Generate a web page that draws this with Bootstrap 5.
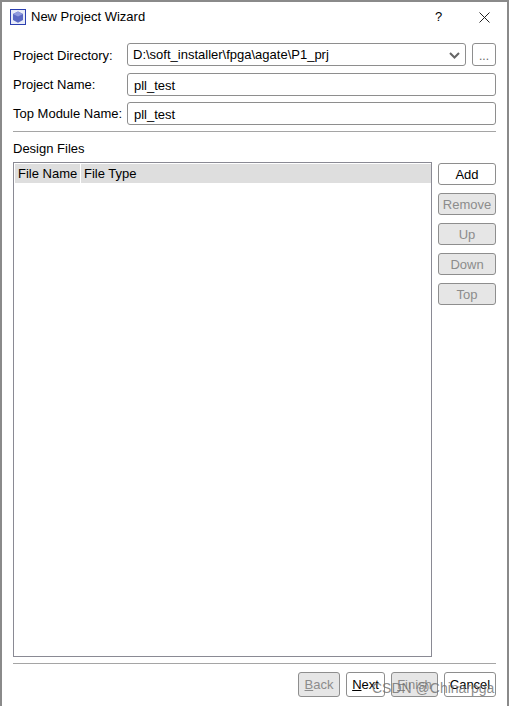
<!DOCTYPE html>
<html lang="en">
<head>
    <meta charset="UTF-8">
    <meta name="viewport" content="width=device-width, initial-scale=1.0">
    <title>New Project Wizard</title>
    <link href="https://cdn.jsdelivr.net/npm/bootstrap@5.3.3/dist/css/bootstrap.min.css" rel="stylesheet">
    <script src="https://cdn.jsdelivr.net/npm/bootstrap@5.3.3/dist/js/bootstrap.bundle.min.js"></script>
    <style>
        html, body { height: 100%; overflow: hidden; }
        body { background: #fff; color: #000; font-family: "Liberation Sans", Arial, sans-serif; font-size: 13px; }
        .wiz-window { position: relative; height: 706px; border: solid #8a8a8a; border-width: 2px 2px 0 2px; }
        .wiz-title { height: 31px; padding-left: 8px; padding-bottom: 1px; font-size: 13px; }
        .wiz-title svg { margin-right: 5px; flex: none; }
        .wiz-help { width: 15px; margin-left: auto; margin-right: 33px; font-size: 13px; text-align: center; }
        .wiz-close { margin-right: 17px !important; }
        .wiz-body { padding: 10px 11px 0 11px; }
        .wiz-row { height: 23px; margin-bottom: 6px; }
        .wiz-row:first-child { margin-bottom: 7px; }
        .wiz-row:first-child .wiz-label { line-height: 26px; }
        .wiz-label { width: 114px; flex: none; line-height: 24px; white-space: nowrap; }
        .wiz-input { flex: 1; height: 23px; border: 1px solid #8e8e8e; border-radius: 3px; padding: 3px 6px; line-height: 18px; color: #000; }
        .wiz-combo { display: flex; align-items: center; justify-content: space-between; padding: 1px 5px 0; }
        .wiz-dots { width: 24px; height: 23px; margin-left: 6px; flex: none; border: 1px solid #8e8e8e; border-radius: 3px; font-size: 12px; line-height: 24px; text-align: center; color: #666; }
        .wiz-rule { height: 1px; background: #a5a5a5; margin: 0; }
        .wiz-heading { margin-top: 9px; height: 21px; line-height: 16px; }
        .wiz-files { height: 495px; }
        .wiz-table { width: 419px; flex: none; border: 1px solid #8a8a94; padding: 1px 0 0 1px; }
        .wiz-head { height: 19px; background: #dedede; line-height: 20px; }
        .wiz-col1 { width: 66px; flex: none; padding-left: 3px; border-right: 1px solid #fff; white-space: nowrap; }
        .wiz-col2 { padding-left: 3px; white-space: nowrap; }
        .wiz-side { margin-left: 6px; width: 58px; gap: 8px; padding-top: 1px; }
        .wiz-btn { height: 22px; padding: 0; border: 1px solid #8e8e8e; border-radius: 3px; background: #fff; color: #000; line-height: 22px; text-align: center; }
        .wiz-btn.off { background: #e6e6e6; color: #8c8c8c; }
        .wiz-foot { margin-top: 6px; padding-top: 8px; border-top: 1px solid #a5a5a5; gap: 6px; }
        .wiz-foot .wiz-btn { height: 25px; line-height: 24px; }
        .w-back { width: 42px; }
        .w-next { width: 39px; }
        .w-finish { width: 47px; }
        .w-cancel { width: 52px; }
        .wiz-mark { position: absolute; left: 370px; top: 676px; font-size: 14px; color: rgba(110,110,110,.8); white-space: nowrap; }
    </style>
</head>
<body>
    <div class="wiz-window">
        <div class="wiz-title d-flex align-items-center">
            <svg width="16" height="16" viewBox="0 0 16 16">
                <rect x=".5" y=".5" width="15" height="15" fill="#e8ecf8" stroke="#2b3fb0"/>
                <path d="M8 2.500 13 5v6l-5 2.800L3 11V5z" fill="#5a69c4"/>
                <path d="M8 2.500 13 5 8 7.600 3 5z" fill="#8f9ade"/>
            </svg>
            <span>New Project Wizard</span>
            <span class="wiz-help">?</span>
            <svg class="wiz-close" width="11" height="11" viewBox="0 0 11 11">
                <path d="M.5.5l10 10M10.500.5l-10 10" stroke="#222" fill="none"/>
            </svg>
        </div>
        <div class="wiz-body">
            <div class="wiz-row d-flex">
                <div class="wiz-label">Project Directory:</div>
                <div class="wiz-input wiz-combo">
                    <span>D:\soft_installer\fpga\agate\P1_prj</span>
                    <svg width="11" height="7" viewBox="0 0 11 7"><path d="M1 1l4.500 4.500L10 1" stroke="#666" stroke-width="2" fill="none"/></svg>
                </div>
                <div class="wiz-dots">...</div>
            </div>
            <div class="wiz-row d-flex">
                <div class="wiz-label">Project Name:</div>
                <div class="wiz-input">pll_test</div>
            </div>
            <div class="wiz-row d-flex">
                <div class="wiz-label">Top Module Name:</div>
                <div class="wiz-input">pll_test</div>
            </div>
            <div class="wiz-rule"></div>
            <div class="wiz-heading">Design Files</div>
            <div class="wiz-files d-flex">
                <div class="wiz-table">
                    <div class="wiz-head d-flex">
                        <div class="wiz-col1">File Name</div>
                        <div class="wiz-col2">File Type</div>
                    </div>
                </div>
                <div class="wiz-side d-flex flex-column">
                    <div class="wiz-btn">Add</div>
                    <div class="wiz-btn off">Remove</div>
                    <div class="wiz-btn off">Up</div>
                    <div class="wiz-btn off">Down</div>
                    <div class="wiz-btn off">Top</div>
                </div>
            </div>
            <div class="wiz-foot d-flex justify-content-end">
                <div class="wiz-btn off w-back"><u>B</u>ack</div>
                <div class="wiz-btn w-next"><u>N</u>ext</div>
                <div class="wiz-btn off w-finish"><u>F</u>inish</div>
                <div class="wiz-btn w-cancel">Cancel</div>
            </div>
        </div>
        <div class="wiz-mark">CSDN @Chinarpga</div>
    </div>
</body>
</html>
